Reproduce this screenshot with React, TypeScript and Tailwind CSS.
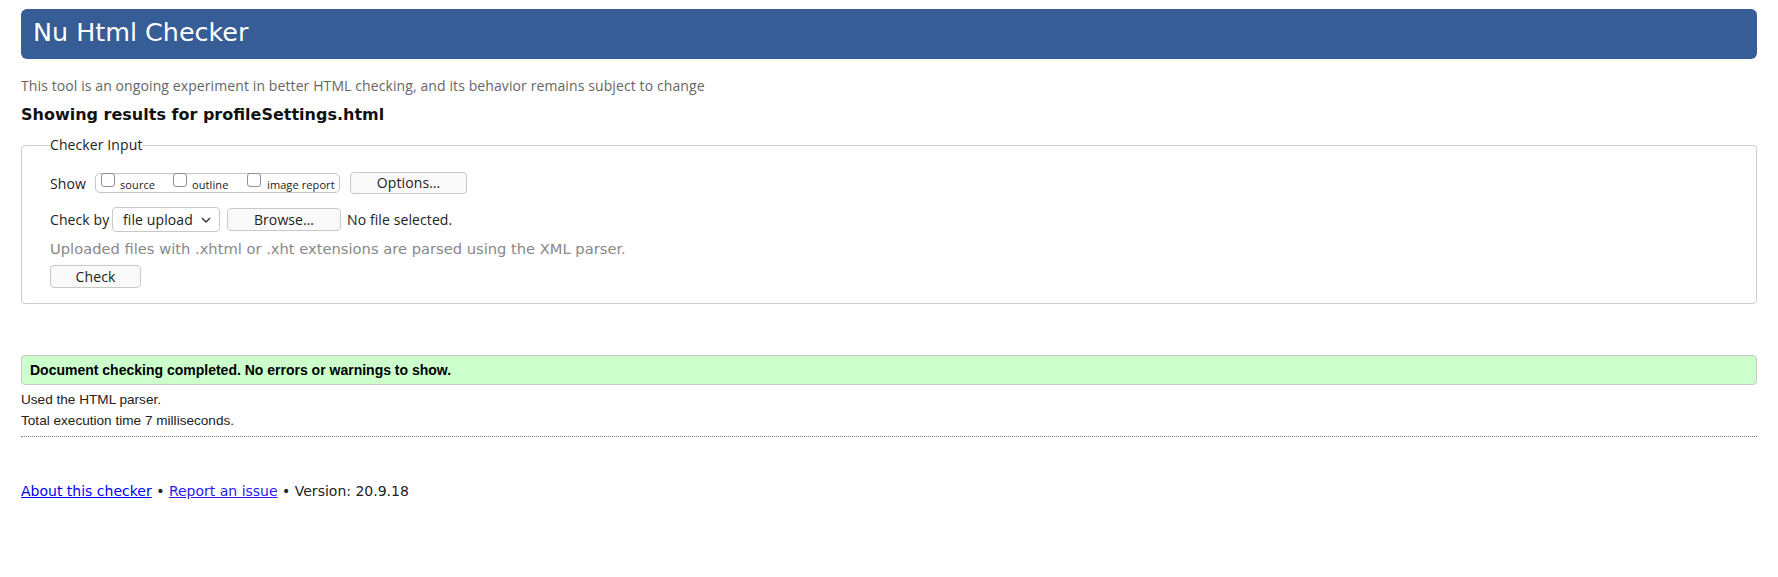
import React from "react";

const ub = "font-['Open_Sans',sans-serif]";

function Checkbox() {
  return (
    <span className="inline-block w-[14px] h-[14px] shrink-0 bg-white border border-[#8f8f9d] rounded-[3px] -mt-px" />
  );
}

export default function App() {
  return (
    <div className="min-h-[577px] bg-white px-[21px] pt-[9px] text-[#222]">
      <h1 className="h-[50px] rounded-[6px] bg-[#365d95] pl-[12px] pt-[9px] text-white text-[25.4px] leading-[29px] font-['DejaVu_Sans',sans-serif] font-normal">
        Nu Html Checker
      </h1>

      <p className={`${ub} mt-[17px] text-[14px] leading-[20px] text-[#666] tracking-[0.1px]`}>
        This tool is an ongoing experiment in better HTML checking, and its behavior remains subject to change
      </p>

      <h2 className="mt-[9px] text-[16px] leading-[20px] font-bold font-['DejaVu_Sans',sans-serif] text-[#111]">
        Showing results for profileSettings.html
      </h2>

      <fieldset className={`${ub} mt-[10px] border border-[#cccccc] rounded-[4px] pl-[28px] pb-[15px] text-[14px] tracking-[0.1px]`}>
        <legend className="leading-[20px] px-0">Checker Input</legend>

        <div className="mt-[17px] flex items-center h-[22px]">
          <span className="w-[45px] shrink-0">Show</span>
          <span className="flex items-start w-[245px] h-[20px] border border-[#c4c4c4] rounded-[5px] pl-[5px] text-[11px] leading-[14px]">
            <span className="flex items-start w-[72px] shrink-0">
              <Checkbox />
              <span className="ml-[5px] mt-[4px]">source</span>
            </span>
            <span className="flex items-start w-[74px] shrink-0">
              <Checkbox />
              <span className="ml-[5px] mt-[4px]">outline</span>
            </span>
            <span className="flex items-start">
              <Checkbox />
              <span className="ml-[6px] mt-[4px]">image report</span>
            </span>
          </span>
          <button className="ml-[10px] w-[117px] h-[22px] bg-[#fafafa] border border-[#c8c8c8] rounded-[4px] text-[14px] leading-[20px] text-[#222]">
            Options…
          </button>
        </div>

        <div className="mt-[13px] flex items-center h-[25px]">
          <span className="w-[62px] shrink-0">Check by</span>
          <span className="flex items-center h-[25px] w-[108px] border border-[#c8c8c8] rounded-[4px] bg-white pl-[10px] pr-[8px] justify-between">
            <span>file upload</span>
            <svg width="10" height="6" viewBox="0 0 10 6" className="mt-[1px]">
              <path d="M1 1 L5 5 L9 1" fill="none" stroke="#333" strokeWidth="1.4" />
            </svg>
          </span>
          <button className="ml-[7px] w-[114px] h-[23px] bg-[#fafafa] border border-[#c8c8c8] rounded-[4px] text-[14px] leading-[20px] text-[#222]">
            Browse…
          </button>
          <span className="ml-[6px]">No file selected.</span>
        </div>

        <p className="mt-[7px] leading-[20px] text-[#888] text-[14.7px] tracking-normal font-['DejaVu_Sans',sans-serif]">
          Uploaded files with .xhtml or .xht extensions are parsed using the XML parser.
        </p>

        <button className="mt-[6px] block w-[91px] h-[23px] bg-[#fafafa] border border-[#c8c8c8] rounded-[4px] text-[14px] leading-[20px] text-[#222]">
          Check
        </button>
      </fieldset>

      <div className="mt-[51px] h-[30px] flex items-center border border-[#c8c8c8] rounded-[4px] bg-[#ccffcc] pl-[8px] font-['Liberation_Sans',Arial,sans-serif] font-bold text-[14px] text-black">
        Document checking completed. No errors or warnings to show.
      </div>

      <div className="mt-[4px] font-['Liberation_Sans',Arial,sans-serif] text-[13.6px] leading-[21px] text-[#222]">
        <p>Used the HTML parser.</p>
        <p>Total execution time 7 milliseconds.</p>
      </div>

      <hr className="mt-[5px] border-0 border-t border-dotted border-[#777]" />

      <p className="mt-[44px] font-['DejaVu_Sans',sans-serif] text-[14px] leading-[20px] text-[#222]">
        <a href="#" className="text-[#0000ee] underline">About this checker</a>
        {" • "}
        <a href="#" className="text-[#2a1aee] underline">Report an issue</a>
        {" • Version: 20.9.18"}
      </p>
    </div>
  );
}
